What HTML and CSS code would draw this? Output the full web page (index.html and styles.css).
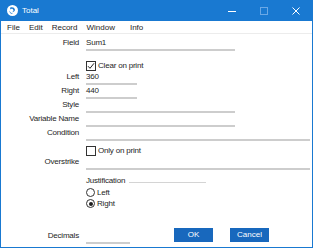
FILE: index.html
```html
<html>
<head>
	<title>Total</title>
	<link rel="stylesheet" href="styles.css">
</head>
<body>
	<div class="window">
		<div class="titlebar">
			<svg class="app-icon" width="11" height="11" viewBox="0 0 11 11">
				<circle cx="5.5" cy="5.5" r="5.5" fill="#fff"/>
				<path d="M3.2 2.6 C5.2 1.6 7.6 2.4 7.9 4.6 C8.1 6.3 6.6 7.4 5.2 7.1 C6.6 6.6 6.9 5 5.9 4.2 C5 3.5 3.9 3.8 3.2 4.6 Z" fill="#1979d1"/>
				<path d="M2.4 5.6 C2.8 7.4 4.4 8.6 6.2 8.3 C4.4 9.4 2.2 8.2 2.4 5.6 Z" fill="#1979d1"/>
			</svg>
			<span class="title">Total</span>
			<div class="controls">
				<span class="ctl"><svg width="8" height="8" viewBox="0 0 8 8"><path d="M0 4.5 H8" stroke="#fff" stroke-width="1"/></svg></span>
				<span class="ctl"><svg width="8" height="8" viewBox="0 0 8 8"><rect x="0.5" y="0.5" width="7" height="7" fill="none" stroke="#6aa8e6" stroke-width="1"/></svg></span>
				<span class="ctl"><svg width="8" height="8" viewBox="0 0 8 8"><path d="M0.5 0.5 L7.5 7.5 M7.5 0.5 L0.5 7.5" stroke="#fff" stroke-width="1"/></svg></span>
			</div>
		</div>
		<div class="menubar">
			<span>File</span>
			<span>Edit</span>
			<span>Record</span>
			<span>Window</span>
			<span>Info</span>
		</div>
		<div class="form">
			<div class="row field-row">
				<span class="label">Field</span>
				<span class="input wide">Sum1</span>
			</div>
			<div class="check-row clear-row">
				<span class="box"><svg width="8" height="8" viewBox="0 0 8 8"><path d="M1 4.2 L3 6.3 L7 1.3" fill="none" stroke="#222" stroke-width="1"/></svg></span>
				<span>Clear on print</span>
			</div>
			<div class="row">
				<span class="label">Left</span>
				<span class="input short">360</span>
			</div>
			<div class="row">
				<span class="label">Right</span>
				<span class="input short">440</span>
			</div>
			<div class="row">
				<span class="label">Style</span>
				<span class="input wide"></span>
			</div>
			<div class="row">
				<span class="label">Variable Name</span>
				<span class="input wide"></span>
			</div>
			<div class="row">
				<span class="label">Condition</span>
				<span class="input full"></span>
			</div>
			<div class="check-row only-row">
				<span class="box"></span>
				<span>Only on print</span>
			</div>
			<div class="row">
				<span class="label">Overstrike</span>
				<span class="input full"></span>
			</div>
			<div class="group-row">
				<span>Justification</span>
				<span class="group-line"></span>
			</div>
			<div class="radio-row first">
				<span class="radio"></span>
				<span>Left</span>
			</div>
			<div class="radio-row">
				<span class="radio checked"></span>
				<span>Right</span>
			</div>
			<div class="footer">
				<div class="row decimals">
					<span class="label">Decimals</span>
					<span class="input tiny"></span>
				</div>
				<button class="btn ok">OK</button>
				<button class="btn cancel">Cancel</button>
			</div>
		</div>
	</div>
</body>
</html>
```

FILE: styles.css
```css
body{
	margin: 0;
	background-color: #fff;
	font-family: "Liberation Sans", Arial, sans-serif;
	font-size: 8px;
	color: #1e1e1e;
}
.window{
	width: 311px;
	height: 247px;
	border: 1px solid #1979d1;
	border-top: none;
}
.titlebar{
	height: 21px;
	background-color: #1979d1;
	color: #fff;
	display: flex;
	align-items: center;
	padding-left: 6px;
}
.app-icon{
	margin-right: 4px;
}
.controls{
	margin-left: auto;
	display: flex;
}
.ctl{
	width: 32px;
	height: 21px;
	display: flex;
	align-items: center;
	justify-content: center;
}
.menubar{
	height: 12px;
	border-bottom: 1px solid #ececec;
	display: flex;
	align-items: center;
	padding-left: 6px;
	gap: 9px;
}
.menubar span:nth-child(4){
	margin-right: 6px;
}
.form{
	padding-top: 3px;
	letter-spacing: -0.2px;
}
.row{
	display: flex;
	align-items: flex-end;
	height: 14px;
}
.label{
	width: 78px;
	margin-right: 7px;
	text-align: right;
	line-height: 12px;
	padding-bottom: 2px;
}
.input{
	height: 12px;
	line-height: 12px;
	border-bottom: 2px solid #cdcdcd;
}
.wide{
	width: 149px;
}
.short{
	width: 51px;
}
.full{
	width: 224px;
}
.tiny{
	width: 44px;
}
.check-row{
	display: flex;
	align-items: center;
	height: 11px;
	margin-left: 85px;
	gap: 2px;
}
.clear-row{
	margin-top: 9px;
}
.only-row{
	margin-top: 4px;
}
.box{
	width: 8px;
	height: 8px;
	border: 1px solid #333;
	background-color: #fff;
	display: flex;
}
.group-row{
	display: flex;
	align-items: center;
	height: 11px;
	margin-top: 5px;
	margin-left: 85px;
}
.group-line{
	width: 77px;
	height: 1px;
	margin-left: 4px;
	margin-top: 3px;
	background-color: #d4d4d4;
}
.radio-row{
	display: flex;
	align-items: center;
	height: 11px;
	margin-left: 85px;
	gap: 2px;
}
.radio-row.first{
	margin-top: 1px;
}
.radio{
	width: 7px;
	height: 7px;
	border: 1px solid #333;
	border-radius: 50%;
	display: flex;
	align-items: center;
	justify-content: center;
}
.radio.checked::after{
	content: "";
	width: 4px;
	height: 4px;
	border-radius: 50%;
	background-color: #1e1e1e;
}
.footer{
	display: flex;
	align-items: flex-start;
	margin-top: 19px;
}
.decimals{
	margin-top: 2px;
}
.btn{
	width: 39px;
	height: 14px;
	padding: 0;
	border: none;
	background-color: #1868bd;
	color: #fff;
	font-family: inherit;
	font-size: 8px;
	line-height: 14px;
}
.ok{
	margin-left: 44px;
}
.cancel{
	margin-left: 17px;
}
```
